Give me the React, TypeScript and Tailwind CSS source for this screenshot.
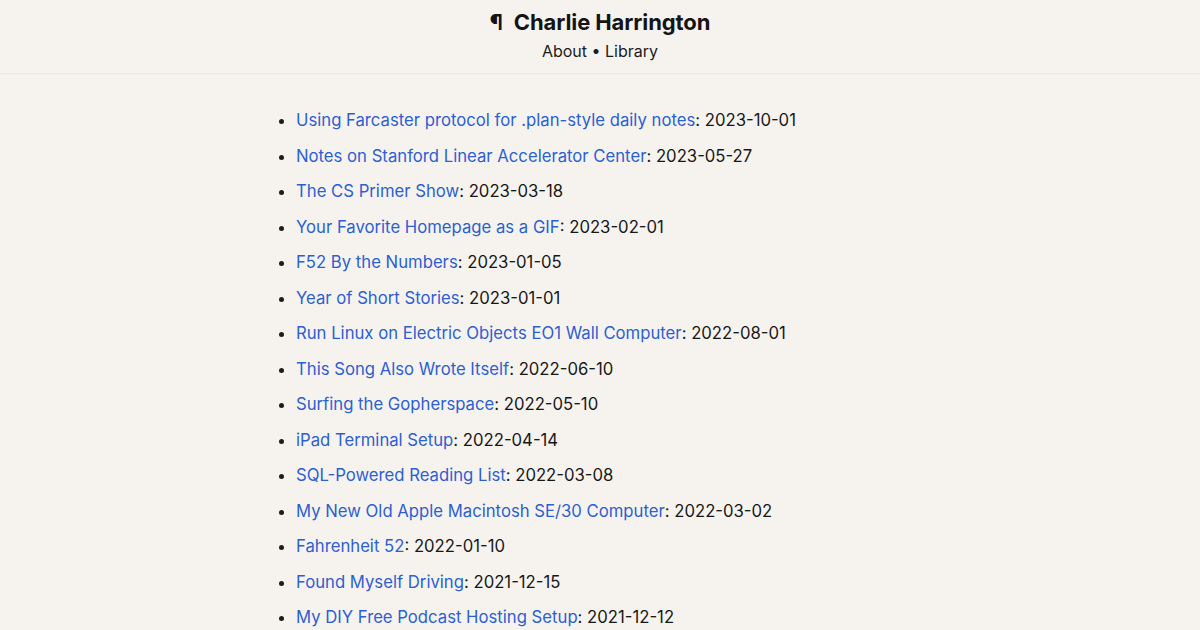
import React from "react";

const posts = [
  { title: "Using Farcaster protocol for .plan-style daily notes", date: "2023-10-01" },
  { title: "Notes on Stanford Linear Accelerator Center", date: "2023-05-27" },
  { title: "The CS Primer Show", date: "2023-03-18" },
  { title: "Your Favorite Homepage as a GIF", date: "2023-02-01" },
  { title: "F52 By the Numbers", date: "2023-01-05" },
  { title: "Year of Short Stories", date: "2023-01-01" },
  { title: "Run Linux on Electric Objects EO1 Wall Computer", date: "2022-08-01" },
  { title: "This Song Also Wrote Itself", date: "2022-06-10" },
  { title: "Surfing the Gopherspace", date: "2022-05-10" },
  { title: "iPad Terminal Setup", date: "2022-04-14" },
  { title: "SQL-Powered Reading List", date: "2022-03-08" },
  { title: "My New Old Apple Macintosh SE/30 Computer", date: "2022-03-02" },
  { title: "Fahrenheit 52", date: "2022-01-10" },
  { title: "Found Myself Driving", date: "2021-12-15" },
  { title: "My DIY Free Podcast Hosting Setup", date: "2021-12-12" },
];

export default function App() {
  return (
    <div
      className="h-[630px] overflow-hidden bg-[#f6f3ef] text-[#171717]"
      style={{ fontFamily: "Inter, 'Noto Sans', sans-serif" }}
    >
      <header className="border-b border-[#ece7e0] pt-[6px] pb-[10px] text-center">
        <h1 className="text-[22px] font-bold leading-[32px] tracking-[-0.1px] text-[#141414]">
          <span className="mr-[11px]">¶</span>Charlie Harrington
        </h1>
        <nav className="mt-[1px] text-[16px] leading-[24px] text-[#1c1c1c]">
          <a href="#">About</a> • <a href="#">Library</a>
        </nav>
      </header>

      <main className="mx-auto w-[640px] pt-[34px]">
        <ul className="list-disc pl-[16px] text-[16.7px] leading-[24px]">
          {posts.map((post) => (
            <li key={post.title} className="mb-[11.5px] marker:text-[#1c1c1c]">
              <a href="#" className="text-[#2c5fcf]">
                {post.title}
              </a>
              : {post.date}
            </li>
          ))}
        </ul>
      </main>
    </div>
  );
}
